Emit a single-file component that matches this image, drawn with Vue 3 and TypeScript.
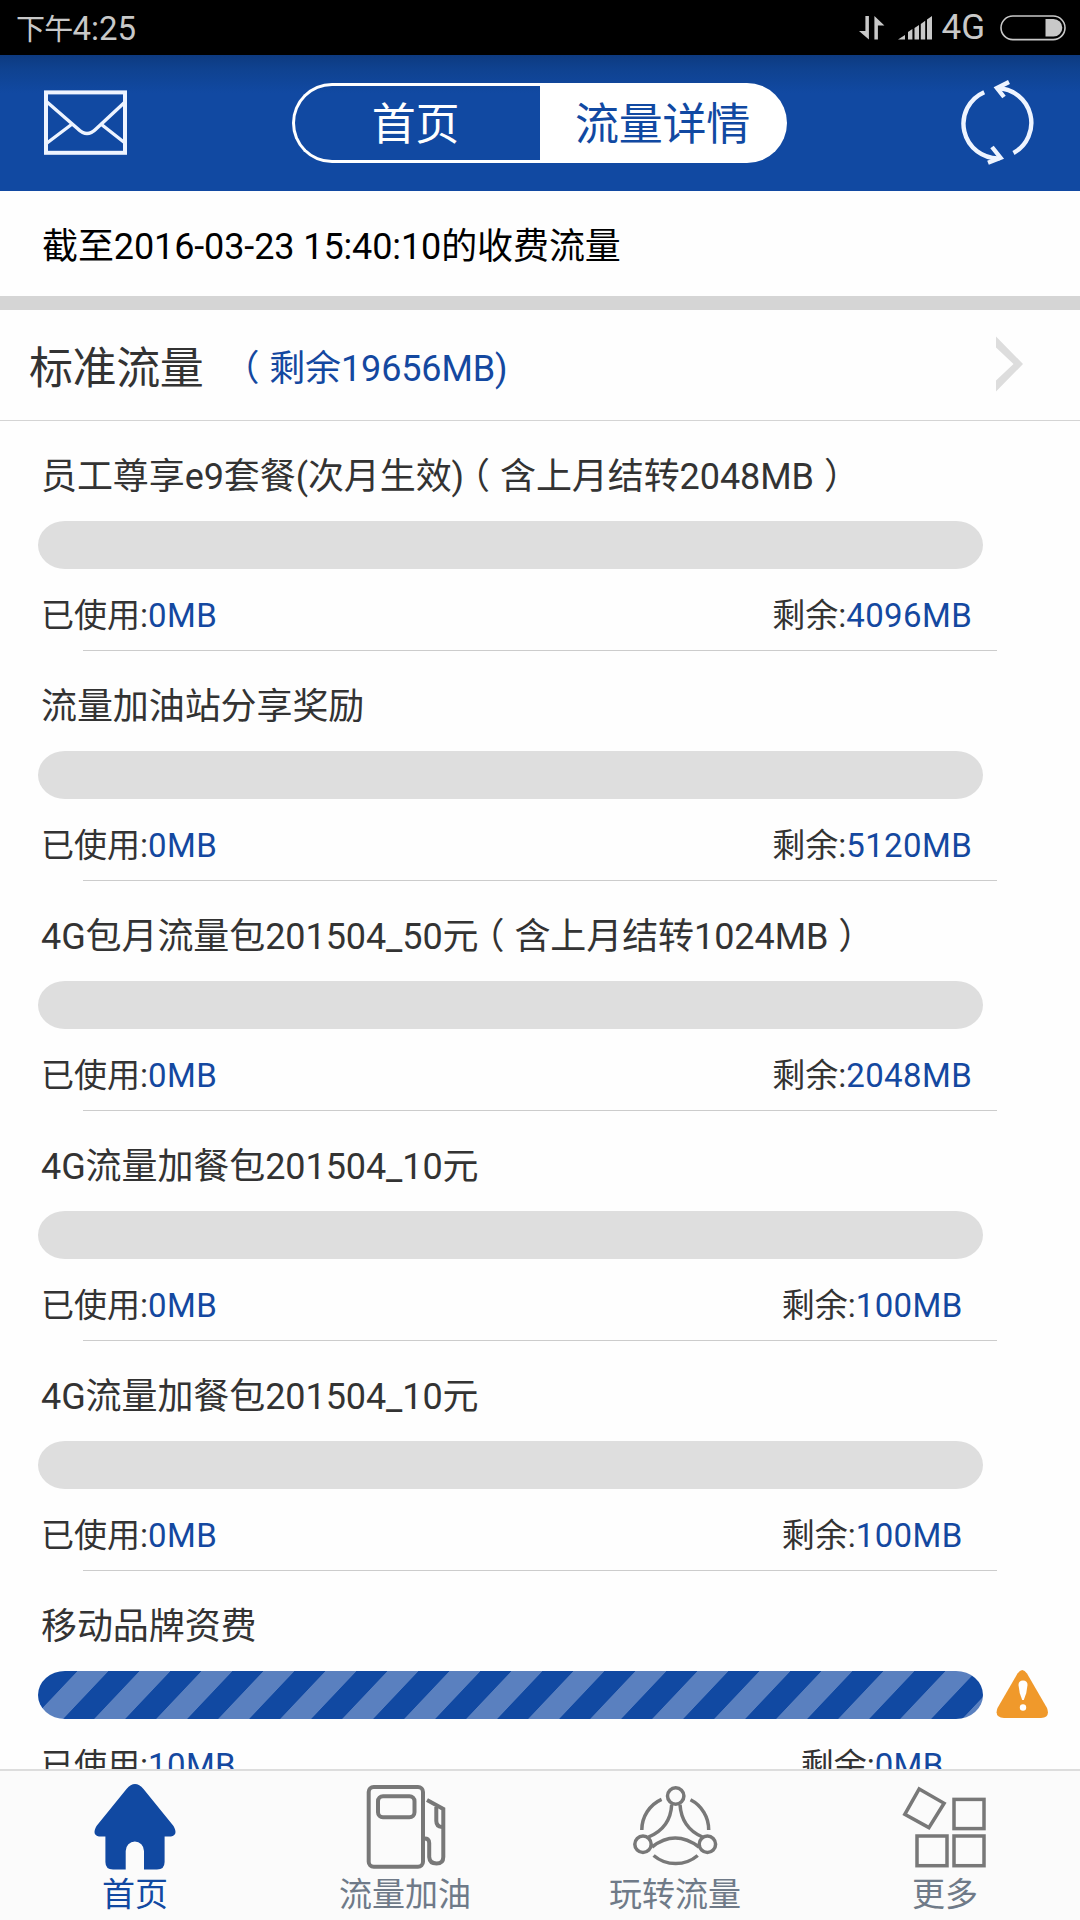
<script setup lang="ts">
interface Plan {
  title: string
  carried?: string
  used: string
  left: string
  full?: boolean
}

type TabIcon = 'home' | 'pump' | 'share' | 'more'

interface Tab {
  label: string
  icon: TabIcon
}

const plans: Plan[] = [
  { title: '员工尊享e9套餐(次月生效)', carried: '含上月结转2048MB', used: '0MB', left: '4096MB' },
  { title: '流量加油站分享奖励', used: '0MB', left: '5120MB' },
  { title: '4G包月流量包201504_50元', carried: '含上月结转1024MB', used: '0MB', left: '2048MB' },
  { title: '4G流量加餐包201504_10元', used: '0MB', left: '100MB' },
  { title: '4G流量加餐包201504_10元', used: '0MB', left: '100MB' },
  { title: '移动品牌资费', used: '10MB', left: '0MB', full: true },
]

const tabs: Tab[] = [
  { label: '首页', icon: 'home' },
  { label: '流量加油', icon: 'pump' },
  { label: '玩转流量', icon: 'share' },
  { label: '更多', icon: 'more' },
]
const activeTab: TabIcon = 'home'
</script>

<template>
  <div class="screen">
    <div class="status">
      <div class="clock"><span class="ampm">下午</span>4:25</div>
      <div class="indicators">
        <svg class="arrows" width="26" height="24" viewBox="0 0 26 24">
          <path d="M6.4 0H9.9V23.5L0 15H6.4Z" />
          <path d="M15.4 23.5V0L25.4 9.5H18.9V23.5Z" />
        </svg>
        <svg class="signal" width="34" height="24" viewBox="0 0 34 24">
          <path d="M0 23.5L7 19V23.5ZM10 23.5V16L14.4 13V23.5ZM16.5 23.5V12L21 9V23.5ZM22.8 23.5V8L27.2 4.8V23.5ZM29 23.5V3.5L34 0V23.5Z" />
        </svg>
        <span class="network">4G</span>
        <svg class="battery" width="66" height="26" viewBox="0 0 66 26">
          <rect x="1" y="1" width="64" height="23.6" rx="11.8" class="shell" />
          <path d="M45.5 4H53.5A8.8 8.8 0 0 1 53.5 21.6H45.5Z" />
        </svg>
      </div>
    </div>

    <header class="top">
      <svg class="mail" width="84" height="66" viewBox="0 0 84 66">
        <rect x="2" y="2.4" width="79" height="60.4" stroke-width="4" />
        <path d="M3 12L34 39Q43 48 52 39L81 12M3 53L27.5 34.5M81 53L57.5 34.5" stroke-width="3.4" />
      </svg>
      <div class="segment">
        <div class="seg">首页</div>
        <div class="seg on">流量详情</div>
      </div>
      <svg class="refresh" width="80" height="88" viewBox="0 0 80 88">
        <path d="M25.2 13.2A34.5 34.5 0 0 0 40.5 79.3M54.5 74A34.5 34.5 0 0 0 38.5 9.3" />
        <path d="M33 68L41.5 78.7L29 83.7M50 3L38 9L45 18" />
      </svg>
    </header>

    <div class="date">截至2016-03-23 15:40:10的收费流量</div>

    <div class="summary">
      <span class="name">标准流量</span>
      <span class="remain"><span class="open">（</span>剩余19656MB)</span>
      <svg class="chevron" width="28" height="58" viewBox="0 0 28 58">
        <path d="M0 0.5L27 28L0 55.5V44.5L17.5 28L0 11.5Z" />
      </svg>
    </div>

    <main class="list">
      <section v-for="(plan, i) in plans" :key="i" class="plan">
        <div class="title">{{ plan.title }}<template v-if="plan.carried"><span class="open">（</span>{{ plan.carried }}<span class="close">）</span></template></div>
        <div class="meter">
          <svg v-if="plan.full" class="bar" width="945" height="48" viewBox="0 0 945 48">
            <defs>
              <pattern id="stripes" width="62" height="48" patternUnits="userSpaceOnUse" patternTransform="translate(8.5 0) skewX(-43.4)">
                <rect width="62" height="48" fill="#5a80bf" />
                <rect width="31" height="48" fill="#1149a2" />
              </pattern>
            </defs>
            <rect width="945" height="48" rx="27" ry="24" fill="url(#stripes)" />
          </svg>
          <div v-else class="bar empty"></div>
          <svg v-if="plan.full" class="warn" width="53" height="50" viewBox="0 0 53 50">
            <path d="M21.5 3.5Q26.2 -3.5 31 3.5L51 38Q54.500 47.500 45 48H8Q-2 47.500 1.500 38Z" fill="#f0992b" />
            <path d="M22.500 15Q22.500 10.500 27 10.500T31.500 15Q31 23 27.800 30H26.200Q23 23 22.500 15Z" fill="#fff" />
            <circle cx="27" cy="37.500" r="3.200" fill="#fff" />
          </svg>
        </div>
        <div class="figures">
          <div class="used">已使用:<b>{{ plan.used }}</b></div>
          <div class="left">剩余:<b>{{ plan.left }}</b></div>
        </div>
        <div class="rule"></div>
      </section>
    </main>

    <nav class="tabs">
      <div v-for="tab in tabs" :key="tab.icon" class="tab" :class="{ active: tab.icon === activeTab }">
        <svg v-if="tab.icon === 'home'" class="icon solid" width="100" height="100" viewBox="0 0 100 100">
          <path d="M41.500 14Q50 4 58.500 14L88.500 51Q93.500 60 86 61.500H79.600V87Q79.600 94.500 72 94.500H59V76A9.150 9.600 0 0 0 40.700 76V94.500H28Q20.400 94.500 20.400 87V61.500H14Q6.500 60 11.500 51Z" />
        </svg>
        <svg v-else-if="tab.icon === 'pump'" class="icon" width="100" height="100" viewBox="0 0 100 100">
          <rect x="13.700" y="12" width="54.300" height="79.700" rx="5" />
          <rect x="23" y="21.300" width="36.500" height="21" rx="5" />
          <path d="M72 25L88.300 34V82Q88.300 88.500 81.500 88.500T74.200 82V68Q74 63 69 63.500" />
          <path d="M81.300 32V46Q81.300 51.500 87 52" />
        </svg>
        <svg v-else-if="tab.icon === 'share'" class="icon thin" width="100" height="100" viewBox="0 0 100 100">
          <circle cx="50.700" cy="21" r="8.200" />
          <circle cx="18" cy="69.300" r="8.200" />
          <circle cx="82.400" cy="69.300" r="8.200" />
          <path d="M36.600 24.300A33.500 33.500 0 0 0 16.800 55M65.500 24.800A33.500 33.500 0 0 1 83.700 55M28.600 80.500A34 34 0 0 0 72.700 80.500" />
          <path d="M46.700 29.500Q45.500 53 23.500 62M55 29.500Q56.500 53 77.500 62M27 72Q50 54 74 72" />
        </svg>
        <svg v-else class="icon thin" width="100" height="100" viewBox="0 0 100 100">
          <path d="M24.200 14L49.100 28.300L33.900 52.600L9.800 39.300Z" />
          <rect x="59" y="24.400" width="30" height="29.200" />
          <rect x="22" y="61" width="30" height="29.700" />
          <rect x="59" y="61" width="30" height="29.700" />
        </svg>
        <span class="label">{{ tab.label }}</span>
      </div>
    </nav>
  </div>
</template>

<style>
body {
  background: #fff;
}
</style>

<style scoped>
.screen {
  width: 1080px;
  height: 1920px;
  display: flex;
  flex-direction: column;
  overflow: hidden;
  background: #fefefe;
  color: #333;
  font-family: Roboto, 'Noto Sans CJK SC', sans-serif;
  font-weight: 400;
  white-space: nowrap;
}

.status {
  flex: none;
  height: 55px;
  display: flex;
  justify-content: space-between;
  padding: 0 14px 0 16px;
  background: #000;
  color: #c8c8c8;
  fill: #c8c8c8;
  font-size: 33px;
  line-height: 57px;
}
.ampm {
  font-size: 29px;
  letter-spacing: -0.8px;
}
.indicators {
  display: flex;
  align-items: center;
}
.signal {
  margin-left: 13px;
}
.network {
  margin-left: 9px;
  font-size: 35px;
}
.battery {
  margin-left: 15px;
}
.shell {
  fill: none;
  stroke: #c8c8c8;
  stroke-width: 1.6;
}

.top {
  flex: none;
  height: 136px;
  box-sizing: border-box;
  display: flex;
  align-items: center;
  padding: 0 41px 0 44px;
  background: linear-gradient(#0d3a80, #0f4290 14px, #1149a2 38px);
}
.mail,
.refresh {
  fill: none;
  stroke: #eef4ff;
}
.refresh {
  margin-left: auto;
  stroke-width: 4.4;
}
.segment {
  width: 495px;
  height: 80px;
  display: flex;
  margin-left: 164px;
}
.seg {
  width: 248px;
  box-sizing: border-box;
  padding-right: 4px;
  border: 3px solid #fff;
  border-right: 0;
  border-radius: 40px 0 0 40px;
  color: #fff;
  font-size: 44px;
  letter-spacing: -0.3px;
  line-height: 79px;
  text-align: center;
}
.seg.on {
  width: 247px;
  padding-right: 2px;
  border: 0;
  border-radius: 0 40px 40px 0;
  background: #fff;
  color: #1149a2;
  line-height: 85px;
}

.date {
  flex: none;
  height: 105px;
  padding-left: 42px;
  border-bottom: 14px solid #d5d5d5;
  color: #000;
  font-size: 36px;
  letter-spacing: -0.11px;
  line-height: 112px;
}

.summary {
  flex: none;
  height: 110px;
  display: flex;
  align-items: center;
  padding: 0 56px 0 29px;
  border-bottom: 1px solid #d4d4d4;
}
.name {
  font-size: 44px;
  letter-spacing: -0.4px;
}
.remain {
  margin-left: 30px;
  color: #1448a0;
  font-size: 36px;
  letter-spacing: -0.15px;
}
.open,
.close {
  font-feature-settings: 'halt';
}
.open {
  margin: 0 10px 0 8px;
}
.close {
  margin-left: 10px;
}
.chevron {
  margin-left: auto;
  fill: #ddd;
}

.list {
  flex: 1;
  min-height: 0;
  overflow: hidden;
}
.plan {
  height: 230px;
  display: flex;
  flex-direction: column;
}
.title {
  height: 100px;
  padding-left: 41px;
  font-size: 36px;
  letter-spacing: -0.08px;
  line-height: 112px;
}
.meter {
  height: 48px;
  display: flex;
  align-items: center;
  gap: 13px;
  padding-left: 38px;
}
.bar {
  flex: none;
  width: 945px;
  height: 48px;
}
.empty {
  border-radius: 27px / 24px;
  background: #dedede;
}
.figures {
  height: 81px;
  display: flex;
  font-size: 33px;
  line-height: 93px;
}
.used {
  width: 665px;
  box-sizing: border-box;
  padding-left: 41px;
}
.left {
  width: 416px;
  text-align: center;
}
b {
  color: #1448a0;
  font-weight: inherit;
  letter-spacing: 0.4px;
}
.rule {
  height: 1px;
  margin: 0 83px;
  background: #ccc;
}

.tabs {
  flex: none;
  height: 151px;
  box-sizing: border-box;
  display: flex;
  border-top: 2px solid #ddd;
  background: #fbfbfb;
}
.tab {
  flex: 1;
  display: flex;
  flex-direction: column;
  align-items: center;
  padding-top: 4px;
  color: #6f7a88;
  font-size: 33px;
}
.tab.active {
  color: #1149a2;
}
.label {
  line-height: 40px;
}
.icon {
  fill: none;
  stroke: #787878;
  stroke-width: 4;
}
.icon.thin {
  stroke-width: 3.5;
}
.icon.solid {
  fill: #1149a2;
  stroke: none;
}
</style>
